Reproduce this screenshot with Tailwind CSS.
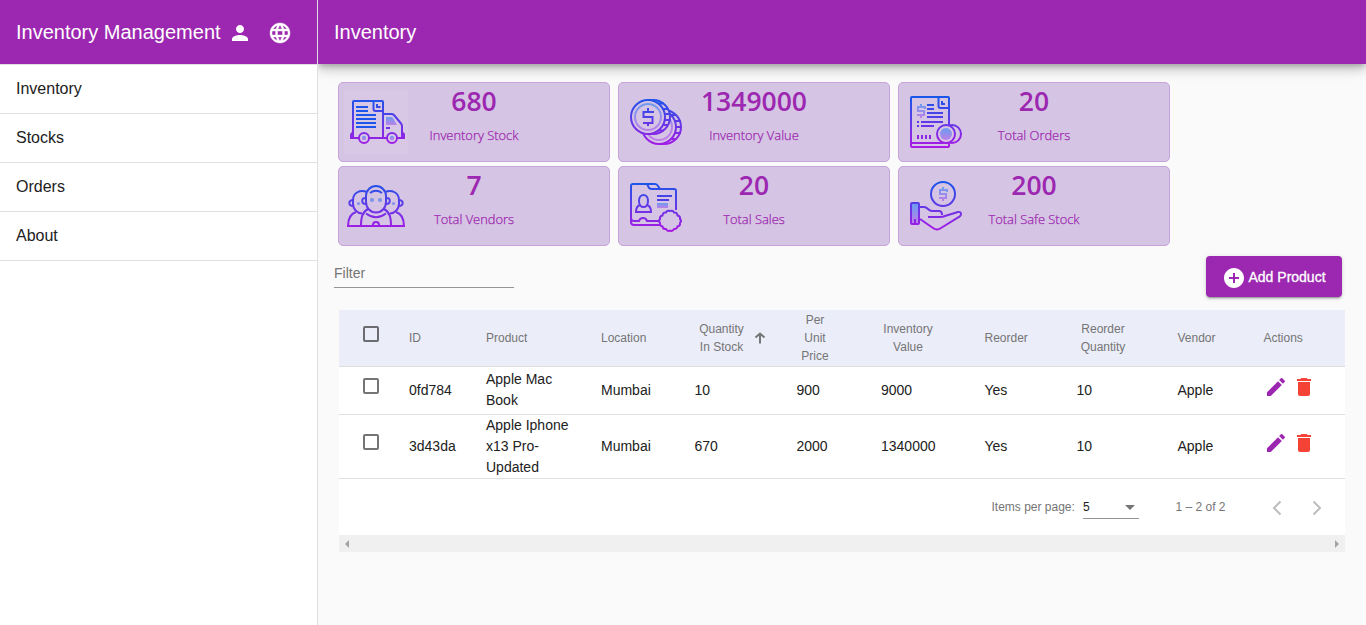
<!DOCTYPE html>
<html lang="en">
<head>
<meta charset="utf-8">
<title>Inventory</title>
<script src="https://cdn.jsdelivr.net/npm/@tailwindcss/browser@4"></script>
</head>
<body class="flex h-[625px] overflow-hidden bg-[#fafafa] font-['Liberation_Sans',Arial,sans-serif] text-[#212121]">
<svg class="absolute h-0 w-0">
  <defs>
    <linearGradient id="line" gradientUnits="userSpaceOnUse" x1="0" y1="8" x2="0" y2="58"><stop offset="0" stop-color="#1a56ea"/><stop offset="1" stop-color="#ac18e4"/></linearGradient>
    <linearGradient id="soft" x1="0" y1="0" x2="0" y2="1"><stop offset="0" stop-color="#6a9df0"/><stop offset="1" stop-color="#bd7fe8"/></linearGradient>
    <linearGradient id="softline" gradientUnits="userSpaceOnUse" x1="0" y1="12" x2="0" y2="42"><stop offset="0" stop-color="#6a9df0"/><stop offset="1" stop-color="#bd7fe8"/></linearGradient>
    <symbol id="pencil" viewBox="0 0 24 24"><path d="M3 17.25V21h3.75L17.81 9.94l-3.75-3.75L3 17.25zM20.71 7.04a1 1 0 0 0 0-1.41l-2.34-2.34a1 1 0 0 0-1.41 0l-1.83 1.83 3.75 3.75 1.83-1.83z"/></symbol>
    <symbol id="bin" viewBox="0 0 24 24"><path d="M6 19c0 1.1.9 2 2 2h8c1.100 0 2-.9 2-2V7H6v12zM19 4h-3.500l-1-1h-5l-1 1H5v2h14V4z"/></symbol>
  </defs>
</svg>

<aside class="flex h-full w-[318px] shrink-0 flex-col border-r border-[#dfdfdf] bg-white">
  <div class="flex h-16 shrink-0 items-center bg-[#9c27b0] pl-4 text-white">
    <h1 class="w-[212.400px] whitespace-nowrap text-[20px]">Inventory Management</h1>
    <svg class="mt-0.5 h-6 w-6 fill-white" viewBox="0 0 24 24"><path d="M12 12c2.210 0 4-1.790 4-4s-1.790-4-4-4-4 1.790-4 4 1.790 4 4 4zm0 2c-2.670 0-8 1.340-8 4v2h16v-2c0-2.660-5.330-4-8-4z"/></svg>
    <svg class="mt-0.5 ml-4 h-6 w-6 fill-white stroke-white stroke-[0.4]" viewBox="0 0 24 24"><path d="M11.990 2C6.470 2 2 6.480 2 12s4.470 10 9.990 10C17.520 22 22 17.520 22 12S17.520 2 11.990 2zm6.930 6h-2.950c-.32-1.250-.78-2.450-1.380-3.560 1.840.63 3.370 1.910 4.330 3.560zM12 4.040c.83 1.200 1.480 2.530 1.910 3.960h-3.820c.43-1.430 1.080-2.760 1.910-3.960zM4.260 14C4.100 13.360 4 12.690 4 12s.1-1.360.26-2h3.380c-.08.66-.14 1.320-.14 2s.06 1.340.14 2H4.260zm.82 2h2.950c.32 1.250.78 2.450 1.380 3.560-1.840-.63-3.370-1.900-4.330-3.560zm2.950-8H5.080c.96-1.660 2.490-2.930 4.330-3.560C8.810 5.550 8.350 6.750 8.030 8zM12 19.960c-.83-1.200-1.480-2.530-1.910-3.960h3.820c-.43 1.430-1.080 2.760-1.910 3.960zM14.340 14H9.660c-.09-.66-.16-1.320-.16-2s.07-1.350.16-2h4.680c.09.65.16 1.320.16 2s-.07 1.340-.16 2zm.25 5.560c.6-1.110 1.060-2.310 1.380-3.560h2.950c-.96 1.650-2.490 2.930-4.330 3.560zM16.360 14c.08-.66.14-1.320.14-2s-.06-1.340-.14-2h3.380c.16.64.26 1.310.26 2s-.1 1.360-.26 2h-3.380z"/></svg>
  </div>
  <nav class="border-t border-[#e0e0e0] text-[16px]">
    <a class="flex h-[49px] items-center border-b border-[#e0e0e0] px-4">Inventory</a>
    <a class="flex h-[49px] items-center border-b border-[#e0e0e0] px-4">Stocks</a>
    <a class="flex h-[49px] items-center border-b border-[#e0e0e0] px-4">Orders</a>
    <a class="flex h-[49px] items-center border-b border-[#e0e0e0] px-4">About</a>
  </nav>
</aside>

<main class="flex min-w-0 flex-1 flex-col overflow-hidden">
  <header class="flex h-16 shrink-0 items-center bg-[#9c27b0] px-4 text-[20px] text-white shadow-[0_3px_5px_-1px_rgba(0,0,0,.2),0_6px_10px_0_rgba(0,0,0,.14),0_1px_18px_0_rgba(0,0,0,.12)]">Inventory</header>

  <section class="mt-[18px] ml-5 grid w-[832px] shrink-0 grid-cols-3 gap-x-2 gap-y-1 font-['Open_Sans','Noto_Sans',sans-serif] text-[#9c27b0]">
    <div class="flex h-20 rounded-[5px] border border-[#c5a3db] bg-[#d6c4e4] pl-[5px]">
      <svg class="mt-[7px] h-16 w-16 bg-white/5" viewBox="0 0 64 64" fill="none" stroke="url(#line)" stroke-width="2">
        <path d="M9 48V12q0-1 1-1H38q1 0 1 1V48M29.500 11v8q0 2 2 2H39M33 14v3h3.500M39 24h8q2 0 3 1l7 8.500q1 1 1 3V48M42 38h4M9 43q-2 0-2 3v2h8M25 48h18M53 48h7v-3q0-2-2-2"/>
        <path d="M12 17h12M12 21h12M12 25h20M12 29h20M12 33h20M12 37h20" stroke="#1a56ea"/>
        <circle cx="20" cy="48" r="5"/><circle cx="48" cy="48" r="5"/>
        <g stroke="none" fill="url(#soft)"><path d="M42 27h5q1 0 2 1l4 7H42z"/><circle cx="20" cy="48" r="2.200"/><circle cx="48" cy="48" r="2.200"/></g>
      </svg>
      <div class="flex w-[132px] flex-col items-center"><b class="mt-px text-[26.500px] leading-[34px] font-semibold">680</b><span class="mt-2 text-[12.900px] leading-[18px] font-light [-webkit-text-stroke:0.250px_#9c27b0]">Inventory Stock</span></div>
    </div>
    <div class="flex h-20 rounded-[5px] border border-[#c5a3db] bg-[#d6c4e4] pl-[5px]">
      <svg class="mt-[7px] h-16 w-16" viewBox="0 0 64 64" fill="none" stroke="url(#line)" stroke-width="2">
        <path d="M35 20h5a17 17 0 0 1 0 34h-5"/><circle cx="35" cy="37" r="17"/>
        <circle cx="35" cy="37" r="13" stroke="url(#softline)"/>
        <path d="M47 25h5M51 31h6M52 37h5M51 43h6M47 49h5"/>
        <path d="M24 10h5a17 17 0 0 1 0 34h-5z" fill="#d6c4e4"/><circle cx="24" cy="27" r="17" fill="#d6c4e4"/>
        <circle cx="24" cy="27" r="13" stroke="url(#softline)"/>
        <path d="M34 13.500h6M39 19h5M41 24h6M41 30h6M39 35h5M34 40.500h6"/>
        <path d="M29 23v-1H19.500v5H28.500v6H19M24 18v4M24 33v3"/>
      </svg>
      <div class="flex w-[132px] flex-col items-center"><b class="mt-px text-[26.500px] leading-[34px] font-semibold">1349000</b><span class="mt-2 text-[12.900px] leading-[18px] font-light [-webkit-text-stroke:0.250px_#9c27b0]">Inventory Value</span></div>
    </div>
    <div class="flex h-20 rounded-[5px] border border-[#c5a3db] bg-[#d6c4e4] pl-[5px]">
      <svg class="mt-[7px] h-16 w-16" viewBox="0 0 64 64" fill="none" stroke="url(#line)" stroke-width="2">
        <path d="M45 36V8q0-1-1-1H8q-1 0-1 1V56q0 1 1 1H44q1 0 1-1V52M7 53H45M34.500 7v9q0 2 2 2H45M38 11v3h3M23 15h7M23 19h7M23 23h16M23 27h16M13 32h2M17 32h22M13 36h2M17 36h13M14 45v4M18 45v4M22 45v4M26 45v4"/>
        <circle cx="48" cy="44" r="9"/><circle cx="42" cy="44" r="9" fill="#d6c4e4"/>
        <circle cx="42" cy="44" r="6" stroke="none" fill="url(#soft)"/>
        <path d="M21 19v-2H14v4H20v4H13M17 14v3M17 25v3" stroke="url(#soft)"/>
      </svg>
      <div class="flex w-[132px] flex-col items-center"><b class="mt-px text-[26.500px] leading-[34px] font-semibold">20</b><span class="mt-2 text-[12.900px] leading-[18px] font-light [-webkit-text-stroke:0.250px_#9c27b0]">Total Orders</span></div>
    </div>
    <div class="flex h-20 rounded-[5px] border border-[#c5a3db] bg-[#d6c4e4] pl-[5px]">
      <svg class="mt-[7px] h-16 w-16" viewBox="0 0 64 64" fill="none" stroke="url(#line)" stroke-width="2">
        <path d="M22 22a10 10 0 0 1 20 0v6c0 6-4.500 10.500-10 10.500S22 34 22 28zM26 19q6-4.500 12 0M22 24c-5-1-5 6 0 6M42 24c5-1 5 6 0 6"/>
        <path d="M23 18c-7-3-14 1-14 8v4c0 5 4 9 9 9.500M41 18c7-3 14 1 14 8v4c0 5-4 9-9 9.500M9 26c-5 0-5 6 .5 6M55 26c5 0 5 6-.5 6"/>
        <path d="M12 38C6 40 4 46 4 52H60C60 46 58 40 52 38M24 35C18 38 17 44 17 52M40 35C46 38 47 44 47 52M22 39.500q10 7.500 20 0M29 52v-1a3 3 0 0 1 6 0v1"/>
        <g stroke="none" fill="#8094e8"><circle cx="28" cy="26" r="2.100"/><circle cx="36" cy="26" r="2.100"/><circle cx="14.500" cy="29.500" r="1.600"/><circle cx="49.500" cy="29.500" r="1.600"/></g>
      </svg>
      <div class="flex w-[132px] flex-col items-center"><b class="mt-px text-[26.500px] leading-[34px] font-semibold">7</b><span class="mt-2 text-[12.900px] leading-[18px] font-light [-webkit-text-stroke:0.250px_#9c27b0]">Total Vendors</span></div>
    </div>
    <div class="flex h-20 rounded-[5px] border border-[#c5a3db] bg-[#d6c4e4] pl-[5px]">
      <svg class="mt-[7px] h-16 w-16" viewBox="0 0 64 64" fill="none" stroke="url(#line)" stroke-width="2">
        <path d="M36 51H10q-3 0-3-3V12q0-2 2-2H31q2 0 3 2l2 3H50q2 0 2 2V36M23 10l2 4q1 1 3 1h8M7 44q0 3 3 3h5q1-3 4-3t4 3H36"/>
        <path d="M15 27c0-8 9-8 9 0s-9 8-9 0zM16 31c-3 1-4 3-4 7H27c0-4-1-6-4-7M33 22h15M33 26h12"/>
        <path d="M33 29h11v5H33z" stroke="none" fill="url(#soft)"/>
        <path d="M46 37q3-1 4 1.500q3-.5 3.500 3q3 .5 2.500 3.500q2 2 0 4q.5 3-2.500 3.500q-1 3-3.500 2.500q-2 3-4 1.500q-2 1.500-4-1.500q-3 .5-3.500-2.500q-3-.5-2.500-3.500q-2-2 0-4q-.5-3 2.500-3.500q.5-3.500 3.500-3q1-2.500 4-1.500z"/>
      </svg>
      <div class="flex w-[132px] flex-col items-center"><b class="mt-px text-[26.500px] leading-[34px] font-semibold">20</b><span class="mt-2 text-[12.900px] leading-[18px] font-light [-webkit-text-stroke:0.250px_#9c27b0]">Total Sales</span></div>
    </div>
    <div class="flex h-20 rounded-[5px] border border-[#c5a3db] bg-[#d6c4e4] pl-[5px]">
      <svg class="mt-[7px] h-16 w-16" viewBox="0 0 64 64" fill="none" stroke="url(#line)" stroke-width="2">
        <circle cx="39" cy="20" r="12"/>
        <path d="M43 18v-2H36v4H42v4H35M39 13v3M39 24v3" stroke="url(#soft)"/>
        <rect x="8" y="30" width="6" height="19" stroke="none" fill="url(#soft)"/>
        <rect x="7" y="29" width="8" height="21" rx="1"/>
        <path d="M11 45v5M16 33h4q2 0 4 2t4 2h7q3 0 3 4M24 43H36q3 0 5-1L54 38q3-.5 3 2 0 2-2 3L37 54q-4 3-8 0L16 45"/>
      </svg>
      <div class="flex w-[132px] flex-col items-center"><b class="mt-px text-[26.500px] leading-[34px] font-semibold">200</b><span class="mt-2 text-[12.900px] leading-[18px] font-light [-webkit-text-stroke:0.250px_#9c27b0]">Total Safe Stock</span></div>
    </div>
  </section>

  <div class="mt-[10px] flex shrink-0 justify-between pr-6 pl-4">
    <div class="h-8 w-[180px] border-b border-[#949494] pt-[7px] text-[14px] leading-[20px] text-[#757575]">Filter</div>
    <button class="flex h-[41px] w-[136px] items-center rounded bg-[#9c27b0] pl-[15.500px] text-[14px] text-white shadow-[0_3px_1px_-2px_rgba(0,0,0,.2),0_2px_2px_0_rgba(0,0,0,.14),0_1px_5px_0_rgba(0,0,0,.12)]">
      <svg class="mt-[3px] h-6 w-6 fill-white" viewBox="0 0 24 24"><path d="M12 2C6.480 2 2 6.480 2 12s4.480 10 10 10 10-4.480 10-10S17.520 2 12 2zm5 11h-4v4h-2v-4H7v-2h4V7h2v4h4v2z"/></svg>
      <span class="mt-0.5 ml-[3px] whitespace-nowrap [-webkit-text-stroke:0.300px_white]">Add Product</span>
    </button>
  </div>

  <div class="mt-[13px] ml-[21px] w-[1006px] shrink-0 bg-white">
    <div class="grid h-[57px] grid-cols-[70px_77px_115px_93.500px_102px_84.500px_103.500px_92px_101px_86px_81.500px] items-center border-b border-[#dedee0] bg-[#ebedf9] text-[12px] leading-[18px] text-[#757575]">
      <i class="mb-2 ml-6 h-4 w-4 rounded-[2px] border-2 border-[#6b6b70]"></i>
      <span>ID</span><span>Product</span><span>Location</span>
      <div class="flex items-center"><span class="w-[54px] text-center">Quantity<br>In Stock</span>
        <svg class="ml-[5.500px] h-3 w-3" viewBox="0 0 12 12" fill="none" stroke="#757575" stroke-width="2"><path d="M6 11.500V2M1.500 5.500 6 1.500 10.500 5.500"/></svg></div>
      <span class="w-[37px] text-center">Per<br>Unit<br>Price</span>
      <span class="w-[54px] text-center">Inventory<br>Value</span>
      <span>Reorder</span>
      <span class="w-[53px] text-center">Reorder<br>Quantity</span>
      <span>Vendor</span><span>Actions</span>
    </div>
    <div class="grid h-12 grid-cols-[70px_77px_115px_93.500px_102px_84.500px_103.500px_92px_101px_86px_81.500px] items-center border-b border-[#e0e0e0] text-[14px] leading-[21px]">
      <i class="mb-[9px] ml-6 h-4 w-4 rounded-[2px] border-2 border-[#757575]"></i>
      <span>0fd784</span><span class="mb-px">Apple Mac<br>Book</span><span>Mumbai</span><span>10</span><span>900</span><span>9000</span><span>Yes</span><span>10</span><span>Apple</span>
      <div class="mb-2 flex gap-1"><svg class="h-6 w-6 fill-[#9c27b0]"><use href="#pencil"/></svg><svg class="h-6 w-6 fill-[#f44336]"><use href="#bin"/></svg></div>
    </div>
    <div class="grid h-16 grid-cols-[70px_77px_115px_93.500px_102px_84.500px_103.500px_92px_101px_86px_81.500px] items-center border-b border-[#e0e0e0] text-[14px] leading-[21px]">
      <i class="mb-[9px] ml-6 h-4 w-4 rounded-[2px] border-2 border-[#757575]"></i>
      <span>3d43da</span><span>Apple Iphone<br>x13 Pro-<br>Updated</span><span>Mumbai</span><span>670</span><span>2000</span><span>1340000</span><span>Yes</span><span>10</span><span>Apple</span>
      <div class="mb-2 flex gap-1"><svg class="h-6 w-6 fill-[#9c27b0]"><use href="#pencil"/></svg><svg class="h-6 w-6 fill-[#f44336]"><use href="#bin"/></svg></div>
    </div>
    <div class="flex h-14 items-center justify-end pr-4 text-[12px] text-[#757575]">
      <span class="w-[91.500px]">Items per page:</span>
      <div class="flex h-6 w-14 items-start justify-between border-b border-[#949494] pr-1 text-[#212121]"><span class="leading-[24px]">5</span><i class="mt-[10px] h-0 w-0 border-x-[5px] border-t-[5px] border-x-transparent border-t-[#757575]"></i></div>
      <span class="ml-[36.500px] w-[89.500px]">1 – 2 of 2</span>
      <svg class="mt-0.5 h-6 w-6" viewBox="0 0 24 24" fill="none" stroke="#bdbdbd" stroke-width="2"><path d="M15.500 5.500 9 12l6.500 6.500"/></svg>
      <svg class="mt-0.5 ml-4 h-6 w-6" viewBox="0 0 24 24" fill="none" stroke="#bdbdbd" stroke-width="2"><path d="M8.500 5.500 15 12l-6.500 6.500"/></svg>
    </div>
    <div class="flex h-[17px] items-center justify-between bg-[#f0f0f0] px-1.5">
      <i class="h-0 w-0 border-y-4 border-r-4 border-y-transparent border-r-[#a3a3a3]"></i>
      <i class="h-0 w-0 border-y-4 border-l-4 border-y-transparent border-l-[#a3a3a3]"></i>
    </div>
  </div>
</main>
</body>
</html>
